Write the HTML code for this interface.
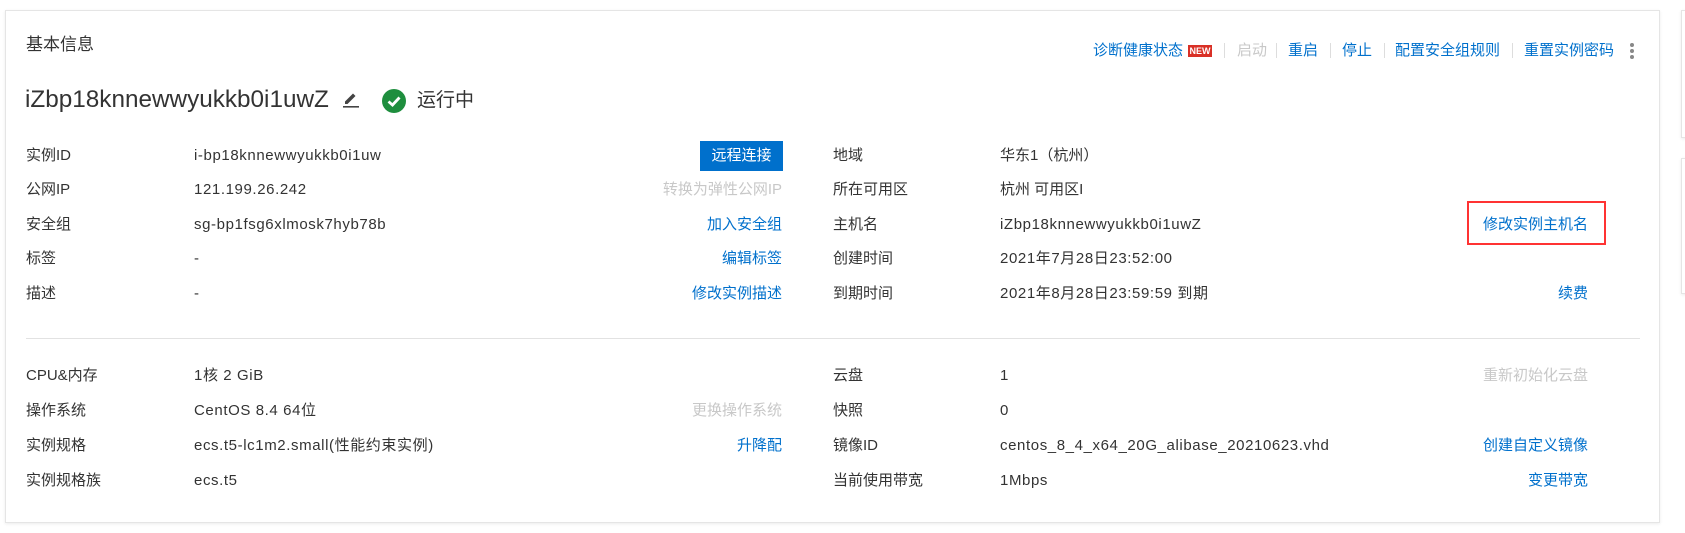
<!DOCTYPE html>
<html><head><meta charset="utf-8"><style>
*{margin:0;padding:0;box-sizing:border-box}
body{width:1685px;height:533px;background:#fff;position:relative;overflow:hidden;font-family:"Liberation Sans","Noto Sans CJK SC",sans-serif;color:#333;font-size:15px}
.card{position:absolute;left:5px;top:10px;width:1655px;height:513px;border:1px solid #e5e5e5;box-shadow:0 1px 3px rgba(0,0,0,.08);background:#fff}
.side{position:absolute;left:1681px;width:20px;border:1px solid #e5e5e5;box-shadow:0 1px 3px rgba(0,0,0,.08)}
.t{position:absolute;white-space:nowrap;line-height:20px;transform:translateY(-10px)}
.v{letter-spacing:0.6px}
.r{text-align:right}
.a{color:#0070cc}
.g{color:#c8c8c8}
.sep{position:absolute;top:43px;width:1px;height:15px;background:#ddd}
</style></head><body>
<div class="card"></div>
<div class="side" style="top:10px;height:128px"></div>
<div class="side" style="top:158px;height:136px"></div>

<div class="t" style="left:26px;top:45px;font-size:17px">基本信息</div>

<div class="t a" style="left:1093px;top:51px">诊断健康状态</div>
<div style="position:absolute;left:1188px;top:45px;width:24px;height:12px;background:#d93026;color:#fff;font-size:9px;font-weight:bold;line-height:12px;text-align:center">NEW</div>
<div class="sep" style="left:1224px"></div>
<div class="t g" style="left:1237px;top:51px">启动</div>
<div class="sep" style="left:1276px"></div>
<div class="t a" style="left:1288px;top:51px">重启</div>
<div class="sep" style="left:1330px"></div>
<div class="t a" style="left:1342px;top:51px">停止</div>
<div class="sep" style="left:1384px"></div>
<div class="t a" style="left:1395px;top:51px">配置安全组规则</div>
<div class="sep" style="left:1512px"></div>
<div class="t a" style="left:1524px;top:51px">重置实例密码</div>
<div style="position:absolute;left:1630px;top:43px;width:4px">
<div style="width:4px;height:4px;border-radius:2px;background:#888;margin-bottom:2px"></div>
<div style="width:4px;height:4px;border-radius:2px;background:#888;margin-bottom:2px"></div>
<div style="width:4px;height:4px;border-radius:2px;background:#888"></div></div>

<div class="t" style="left:25px;top:100px;font-size:24.3px;line-height:30px;transform:translateY(-15px)">iZbp18knnewwyukkb0i1uwZ</div>
<svg style="position:absolute;left:342px;top:91px" width="18" height="18" viewBox="0 0 18 18"><path d="M3 13 L3 10.5 L11 2.5 L13.5 5 L5.5 13 Z" fill="#444"/><rect x="1" y="15" width="16" height="1.6" fill="#444"/></svg>
<svg style="position:absolute;left:382px;top:89px" width="24" height="24" viewBox="0 0 24 24"><circle cx="12" cy="12" r="12" fill="#1e8e3e"/><path d="M6.5 12.5 L10.5 16 L17.5 8.5" stroke="#fff" stroke-width="2.8" fill="none"/></svg>
<div class="t" style="left:417px;top:101px;font-size:19px">运行中</div>

<div class="t" style="left:26px;top:156px">实例ID</div>
<div class="t v" style="left:194px;top:156px">i-bp18knnewwyukkb0i1uw</div>
<div style="position:absolute;left:700px;top:141px;width:83px;height:30px;background:#0070cc;color:#fff;line-height:30px;text-align:center;font-size:15px">远程连接</div>
<div class="t" style="left:26px;top:190px">公网IP</div>
<div class="t v" style="left:194px;top:190px">121.199.26.242</div>
<div class="t g r" style="right:903px;top:190px">转换为弹性公网IP</div>
<div class="t" style="left:26px;top:225px">安全组</div>
<div class="t v" style="left:194px;top:225px">sg-bp1fsg6xlmosk7hyb78b</div>
<div class="t a r" style="right:903px;top:225px">加入安全组</div>
<div class="t" style="left:26px;top:259px">标签</div>
<div class="t" style="left:194px;top:259px">-</div>
<div class="t a r" style="right:903px;top:259px">编辑标签</div>
<div class="t" style="left:26px;top:294px">描述</div>
<div class="t" style="left:194px;top:294px">-</div>
<div class="t a r" style="right:903px;top:294px">修改实例描述</div>

<div class="t" style="left:833px;top:156px">地域</div>
<div class="t" style="left:1000px;top:156px">华东1（杭州）</div>
<div class="t" style="left:833px;top:190px">所在可用区</div>
<div class="t" style="left:1000px;top:190px">杭州 可用区I</div>
<div class="t" style="left:833px;top:225px">主机名</div>
<div class="t v" style="left:1000px;top:225px">iZbp18knnewwyukkb0i1uwZ</div>
<div style="position:absolute;left:1467px;top:201px;width:139px;height:44px;border:2px solid #f33"></div>
<div class="t a r" style="right:97px;top:225px">修改实例主机名</div>
<div class="t" style="left:833px;top:259px">创建时间</div>
<div class="t v" style="left:1000px;top:259px">2021年7月28日23:52:00</div>
<div class="t" style="left:833px;top:294px">到期时间</div>
<div class="t v" style="left:1000px;top:294px">2021年8月28日23:59:59 到期</div>
<div class="t a r" style="right:97px;top:294px">续费</div>

<div style="position:absolute;left:26px;top:338px;width:1614px;height:1px;background:#e2e2e2"></div>

<div class="t" style="left:26px;top:376px">CPU&amp;内存</div>
<div class="t v" style="left:194px;top:376px">1核 2 GiB</div>
<div class="t" style="left:26px;top:411px">操作系统</div>
<div class="t v" style="left:194px;top:411px">CentOS 8.4 64位</div>
<div class="t g r" style="right:903px;top:411px">更换操作系统</div>
<div class="t" style="left:26px;top:446px">实例规格</div>
<div class="t v" style="left:194px;top:446px">ecs.t5-lc1m2.small(性能约束实例)</div>
<div class="t a r" style="right:903px;top:446px">升降配</div>
<div class="t" style="left:26px;top:481px">实例规格族</div>
<div class="t v" style="left:194px;top:481px">ecs.t5</div>

<div class="t" style="left:833px;top:376px">云盘</div>
<div class="t" style="left:1000px;top:376px">1</div>
<div class="t g r" style="right:97px;top:376px">重新初始化云盘</div>
<div class="t" style="left:833px;top:411px">快照</div>
<div class="t" style="left:1000px;top:411px">0</div>
<div class="t" style="left:833px;top:446px">镜像ID</div>
<div class="t v" style="left:1000px;top:446px">centos_8_4_x64_20G_alibase_20210623.vhd</div>
<div class="t a r" style="right:97px;top:446px">创建自定义镜像</div>
<div class="t" style="left:833px;top:481px">当前使用带宽</div>
<div class="t v" style="left:1000px;top:481px">1Mbps</div>
<div class="t a r" style="right:97px;top:481px">变更带宽</div>
</body></html>
